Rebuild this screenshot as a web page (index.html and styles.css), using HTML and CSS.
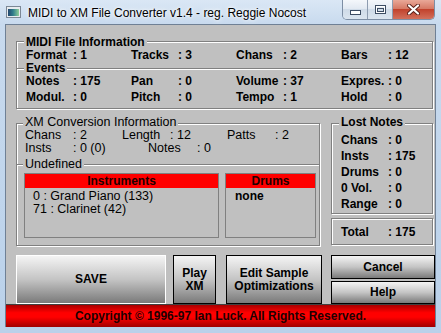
FILE: index.html
```html
<!DOCTYPE html>
<html lang="en">
<head>
    <meta charset="UTF-8">
    <title>MIDI to XM File Converter</title>
    <link rel="stylesheet" href="styles.css">
</head>
<body>
<div class="window">
    <div class="titlebar">
        <svg class="app-icon" width="15" height="12" viewBox="0 0 15 12">
            <defs>
                <linearGradient id="scr" x1="0" y1="0" x2="1" y2="0">
                    <stop offset="0" stop-color="#24476f"/>
                    <stop offset="0.45" stop-color="#2f7d8c"/>
                    <stop offset="1" stop-color="#8fcf9a"/>
                </linearGradient>
            </defs>
            <rect x="0.5" y="0.5" width="14" height="11" fill="#e8ecef" stroke="#7c8896"/>
            <rect x="2" y="3" width="11" height="7" fill="url(#scr)"/>
        </svg>
        <span class="title">MIDI to XM File Converter v1.4 - reg. Reggie Nocost</span>
        <div class="caption-btns">
            <span class="cbtn min">
                <svg width="11" height="5" viewBox="0 0 11 5"><rect x="0.5" y="0.5" width="10" height="4" fill="#fff" stroke="#3d4d63"/></svg>
            </span>
            <span class="cbtn max">
                <svg width="11" height="9" viewBox="0 0 11 9"><rect x="0.5" y="0.5" width="10" height="8" fill="none" stroke="#3d4d63"/><rect x="1.5" y="1.5" width="8" height="6" fill="none" stroke="#fff"/><rect x="2.5" y="3.5" width="6" height="3" fill="none" stroke="#3d4d63"/></svg>
            </span>
            <span class="cbtn close">
                <svg width="13" height="11" viewBox="0 0 13 11">
                    <path d="M2 1.5 L11 9.5 M11 1.5 L2 9.5" stroke="#5a211a" stroke-width="4" stroke-linecap="round"/>
                    <path d="M2 1.5 L11 9.5 M11 1.5 L2 9.5" stroke="#fff" stroke-width="2.2" stroke-linecap="round"/>
                </svg>
            </span>
        </div>
    </div>

    <div class="client">
        <div class="group midi">
            <div class="cap">MIDI File Information</div>
            <div class="row4 first">
                <span><span class="k">Format</span>: 1</span>
                <span><span class="k">Tracks</span>: 3</span>
                <span><span class="k">Chans</span>: 2</span>
                <span><span class="k">Bars</span>: 12</span>
            </div>
            <div class="sub events">
                <div class="cap">Events</div>
                <div class="row4 first">
                    <span><span class="k">Notes</span>: 175</span>
                    <span><span class="k">Pan</span>: 0</span>
                    <span><span class="k">Volume</span>: 37</span>
                    <span><span class="k">Expres.</span>: 0</span>
                </div>
                <div class="row4">
                    <span><span class="k">Modul.</span>: 0</span>
                    <span><span class="k">Pitch</span>: 0</span>
                    <span><span class="k">Tempo</span>: 1</span>
                    <span><span class="k">Hold</span>: 0</span>
                </div>
            </div>
        </div>

        <div class="middle">
            <div class="group xm">
                <div class="cap">XM Conversion Information</div>
                <div class="xrow r1">
                    <span><span class="k">Chans</span>: 2</span>
                    <span><span class="k">Length</span>: 12</span>
                    <span><span class="k">Patts</span>: 2</span>
                </div>
                <div class="xrow r2">
                    <span><span class="k">Insts</span>: 0 (0)</span>
                    <span><span class="k k2">Notes</span>: 0</span>
                </div>
                <div class="sub undefined">
                    <div class="cap">Undefined</div>
                    <div class="tables">
                        <div class="tbl inst">
                            <div class="tbl-head">Instruments</div>
                            <div class="tbl-body">
                                <div>0 : Grand Piano (133)</div>
                                <div>71 : Clarinet (42)</div>
                            </div>
                        </div>
                        <div class="tbl drums">
                            <div class="tbl-head">Drums</div>
                            <div class="tbl-body bold">
                                <div>none</div>
                            </div>
                        </div>
                    </div>
                </div>
            </div>

            <div class="side">
                <div class="group lost">
                    <div class="cap">Lost Notes</div>
                    <div class="lrow first"><span class="k">Chans</span>: 0</div>
                    <div class="lrow"><span class="k">Insts</span>: 175</div>
                    <div class="lrow"><span class="k">Drums</span>: 0</div>
                    <div class="lrow"><span class="k">0 Vol.</span>: 0</div>
                    <div class="lrow"><span class="k">Range</span>: 0</div>
                </div>
                <div class="group total">
                    <div class="lrow"><span class="k">Total</span>: 175</div>
                </div>
            </div>
        </div>

        <div class="buttons">
            <button class="btn save">SAVE</button>
            <button class="btn play">Play<br>XM</button>
            <button class="btn edit">Edit Sample<br>Optimizations</button>
            <div class="stack">
                <button class="btn cancel">Cancel</button>
                <button class="btn help">Help</button>
            </div>
        </div>

        <div class="copyright">Copyright © 1996-97 Ian Luck. All Rights Reserved.</div>
    </div>
</div>
</body>
</html>
```

FILE: styles.css
```css
* {
    box-sizing: border-box;
}
body {
    margin: 0;
    font-family: "Liberation Sans", Arial, sans-serif;
    color: #000;
}
.window {
    width: 441px;
    height: 333px;
    padding: 0 5px;
    background: linear-gradient(#dae7f5 0, #c8daee 24px, #bad1ea 100%);
    overflow: hidden;
}

/* title bar */
.titlebar {
    height: 24px;
    display: flex;
    align-items: flex-start;
}
.app-icon {
    margin: 6px 0 0 1px;
}
.title {
    margin-left: 7px;
    padding-top: 6px;
    font-size: 12px;
    line-height: 14px;
    text-shadow: 0 0 6px #fff, 0 0 3px #fff;
}
.caption-btns {
    margin-left: auto;
    margin-right: 1px;
    display: flex;
    height: 20px;
    border: 1px solid #7d8ea4;
    border-top: 0;
    border-radius: 0 0 5px 5px;
    overflow: hidden;
}
.cbtn {
    display: flex;
    align-items: center;
    justify-content: center;
    height: 19px;
}
.min, .max {
    width: 25px;
    border-right: 1px solid #8d9cb0;
    background: linear-gradient(#f4f7fb, #e2e9f2 45%, #cfdbe8 50%, #dbe5ef);
}
.min svg {
    margin-top: 6px;
}
.close {
    width: 41px;
    background: linear-gradient(#e9a898, #d67a66 45%, #c2432d 50%, #d2705c);
}

/* client area */
.client {
    height: 303px;
    border: 1px solid #6f8095;
    border-bottom: 0;
    background: #c0c0c0;
}
.group {
    border: 1px solid #808080;
    box-shadow: inset 1px 1px 0 #fff, 1px 1px 0 #fff;
}
.sub {
    border-top: 1px solid #808080;
    box-shadow: inset 0 1px 0 #fff;
}
.cap {
    width: max-content;
    height: 14px;
    padding: 0 2px;
    background: #c0c0c0;
    line-height: 14px;
}

/* MIDI file information */
.midi {
    margin: 16px 2px 0 10px;
    padding-bottom: 3px;
    font-size: 12px;
    font-weight: bold;
}
.midi .cap {
    margin: -7px 0 0 7px;
}
.row4 {
    display: grid;
    grid-template-columns: 105px 105px 105px 1fr;
    padding-left: 9px;
    line-height: 16px;
}
.row4.first {
    margin-top: -2px;
}
.row4 .k {
    display: inline-block;
    width: 47px;
}
.events {
    margin-top: 5px;
}
.events .cap {
    margin: -8px 0 0 7px;
}

/* middle part */
.middle {
    display: flex;
    align-items: flex-start;
    margin-top: 14px;
}
.xm {
    width: 304px;
    margin-left: 10px;
    padding-bottom: 7px;
    font-size: 12.5px;
}
.xm .cap {
    margin: -9px 0 0 6px;
}
.xrow {
    display: flex;
    padding-left: 8px;
    line-height: 13px;
}
.xrow .k {
    display: inline-block;
    width: 48px;
}
.xrow .k2 {
    width: 49px;
}
.r1 > span:nth-child(1) { width: 97px; }
.r1 > span:nth-child(2) { width: 105px; }
.r2 > span:nth-child(1) { width: 123px; }

.undefined {
    margin-top: 9px;
}
.undefined .cap {
    margin: -8px 0 0 6px;
}
.tables {
    display: flex;
    margin: 2px 0 0 7px;
    gap: 6px;
}
.tbl {
    height: 65px;
    border: 1px solid #808080;
}
.inst {
    width: 195px;
}
.drums {
    width: 91px;
}
.tbl-head {
    height: 14px;
    background: #ff0000;
    color: #200000;
    font-size: 12px;
    font-weight: bold;
    line-height: 14px;
    text-align: center;
}
.tbl-body {
    padding: 2px 0 0 8px;
    line-height: 13px;
}
.tbl-body.bold {
    padding-left: 9px;
    font-size: 12px;
    font-weight: bold;
}

/* lost notes */
.side {
    width: 102px;
    margin-left: 11px;
    font-size: 12px;
    font-weight: bold;
}
.lost {
    padding-bottom: 1px;
}
.lost .cap {
    margin: -9px 0 0 7px;
}
.lrow {
    padding-left: 9px;
    line-height: 16px;
}
.lrow.first {
    margin-top: 3px;
}
.lrow .k {
    display: inline-block;
    width: 47px;
}
.total {
    margin-top: 4px;
    padding: 5px 0 4px;
}

/* buttons */
.buttons {
    display: flex;
    height: 49px;
    margin: 9px 0 0 10px;
}
.btn {
    display: flex;
    align-items: center;
    justify-content: center;
    margin: 0;
    padding: 0;
    border: 1px solid #000;
    background: linear-gradient(#f4f4f4, #c4c4c4 50%, #7a7a7a);
    color: #000;
    font-family: inherit;
    font-size: 12px;
    font-weight: bold;
    line-height: 13px;
    text-align: center;
}
.save {
    width: 150px;
    border-color: #fff;
}
.play {
    width: 43px;
    margin-left: 7px;
}
.edit {
    width: 96px;
    margin-left: 10px;
}
.stack {
    display: flex;
    flex-direction: column;
    gap: 2px;
    width: 104px;
    margin-left: 9px;
}
.cancel {
    height: 24px;
}
.help {
    height: 23px;
}

.copyright {
    height: 23px;
    border-top: 1px solid #404040;
    background: linear-gradient(#a80000, #ff0000 35%, #ff0000 55%, #a00000);
    color: #200000;
    font-size: 12px;
    font-weight: bold;
    line-height: 22px;
    text-align: center;
}
```
